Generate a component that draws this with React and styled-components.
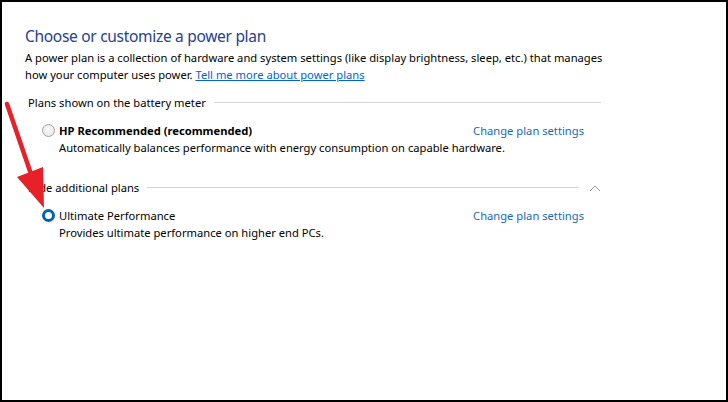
import styled, { createGlobalStyle } from "styled-components";

const GlobalStyle = createGlobalStyle`
  html, body {
    margin: 0;
    padding: 0;
    background: #fff;
  }
  body {
    font-family: "Noto Sans", "Open Sans", sans-serif;
  }
`;

const plans = [
  {
    id: "battery",
    title: "Plans shown on the battery meter",
    top: 11,
    collapsible: false,
    items: [
      {
        name: "HP Recommended (recommended)",
        desc: "Automatically balances performance with energy consumption on capable hardware.",
        bold: true,
        selected: false,
      },
    ],
  },
  {
    id: "extra",
    title: "Hide additional plans",
    top: 23,
    collapsible: true,
    items: [
      {
        name: "Ultimate Performance",
        desc: "Provides ultimate performance on higher end PCs.",
        bold: false,
        selected: true,
      },
    ],
  },
];

const App = () => {
  return (
    <>
      <GlobalStyle />
      <Frame>
        <Content>
          <Title>Choose or customize a power plan</Title>
          <Intro>
            A power plan is a collection of hardware and system settings (like display brightness, sleep, etc.) that manages
            <br />
            how your computer uses power. <Link href="#">Tell me more about power plans</Link>
          </Intro>
          {plans.map((group) => (
            <Group key={group.id} $top={group.top}>
              <GroupHeader>
                <GroupTitle>{group.title}</GroupTitle>
                <Rule />
                {group.collapsible && (
                  <Chevron viewBox="0 0 12 8" width="12" height="8">
                    <polyline points="1,7 6,2 11,7" fill="none" stroke="#9a9a9a" strokeWidth="1" />
                  </Chevron>
                )}
              </GroupHeader>
              {group.items.map((plan) => (
                <Plan key={plan.name}>
                  <PlanRow>
                    <Radio $selected={plan.selected} />
                    <PlanName $bold={plan.bold}>{plan.name}</PlanName>
                    <SettingsLink href="#">Change plan settings</SettingsLink>
                  </PlanRow>
                  <PlanDesc>{plan.desc}</PlanDesc>
                </Plan>
              ))}
            </Group>
          ))}
        </Content>
        <Arrow viewBox="0 0 60 220" width="60" height="220">
          <line x1="7" y1="104" x2="31" y2="174" stroke="#e8202a" strokeWidth="4.5" strokeLinecap="round" />
          <polygon points="17,177 43,167 44,208" fill="#e8202a" />
        </Arrow>
      </Frame>
    </>
  );
};

const Frame = styled.div`
  position: relative;
  box-sizing: border-box;
  width: 728px;
  height: 402px;
  border: 2px solid #000;
  background: #fff;
  overflow: hidden;
`;

const Content = styled.div`
  padding: 23px 0 0 23px;
  color: #000;
  font-size: 11.2px;
`;

const Title = styled.h1`
  margin: 0;
  font-size: 15.5px;
  letter-spacing: -0.3px;
  line-height: 22px;
  font-weight: 400;
  color: #26418f;
`;

const Intro = styled.p`
  margin: 2px 0 0;
  line-height: 17px;
`;

const Link = styled.a`
  color: #0066cc;
  text-decoration: underline;
`;

const Group = styled.section`
  margin-top: ${({ $top }) => $top}px;
  width: 573px;
  padding-left: 3px;
`;

const GroupHeader = styled.div`
  display: flex;
  align-items: center;
  height: 17px;
  gap: 8px;
`;

const GroupTitle = styled.span`
  white-space: nowrap;
`;

const Rule = styled.div`
  flex: 1;
  height: 1px;
  background: #d5d5d5;
`;

const Chevron = styled.svg`
  margin-left: 2px;
  flex: none;
`;

const Plan = styled.div`
  margin-top: 9px;
`;

const PlanRow = styled.div`
  display: grid;
  grid-template-columns: 13px 1fr auto;
  align-items: center;
  column-gap: 4px;
  height: 20px;
  padding-left: 14px;
  padding-right: 17px;
`;

const Radio = styled.span`
  box-sizing: border-box;
  width: 13px;
  height: 13px;
  border-radius: 50%;
  border: ${({ $selected }) => ($selected ? "3px solid #0063b1" : "1px solid #a2a2a2")};
  background: ${({ $selected }) =>
    $selected ? "#fff" : "radial-gradient(circle at 50% 40%, #fafafa, #e4e4e4)"};
`;

const PlanName = styled.span`
  font-weight: ${({ $bold }) => ($bold ? 700 : 400)};
`;

const SettingsLink = styled.a`
  color: #1a68b8;
  text-decoration: none;
`;

const PlanDesc = styled.div`
  padding-left: 31px;
  line-height: 17px;
  margin-top: -1px;
`;

const Arrow = styled.svg`
  position: absolute;
  left: -2px;
  top: -2px;
  pointer-events: none;
`;

export default App;
